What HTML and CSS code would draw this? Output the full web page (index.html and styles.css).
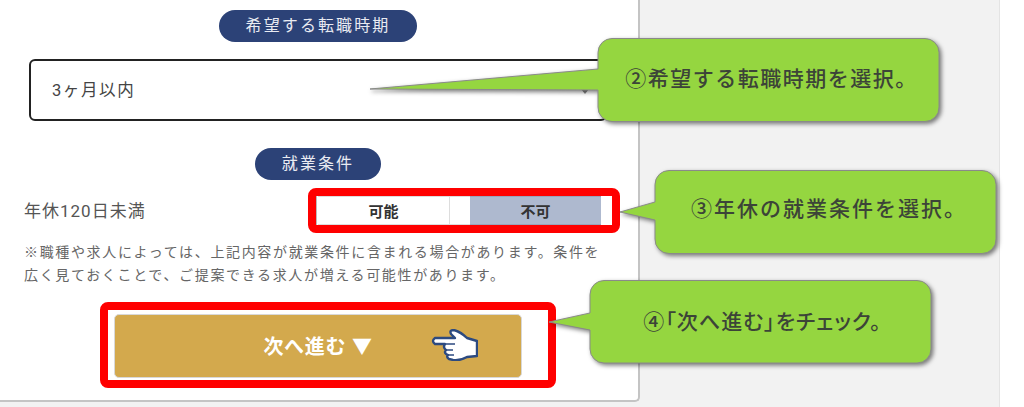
FILE: index.html
```html
<!DOCTYPE html>
<html lang="ja">
  <head>
    <meta charset="UTF-8" />
    <title>希望する転職時期</title>
    <link rel="stylesheet" href="styles.css">
  </head>
  <body>
    <div class="page">
      <div class="card">
        <div class="section-title"><span class="pill">希望する転職時期</span></div>
        <div class="select">
          <span>3ヶ月以内</span>
          <span class="select-arrow"></span>
        </div>

        <div class="section-title section-title-second"><span class="pill">就業条件</span></div>
        <div class="condition-row">
          <span class="condition-label">年休120日未満</span>
          <div class="highlight">
            <div class="toggle">
              <div class="toggle-item">可能</div>
              <div class="toggle-gap"></div>
              <div class="toggle-item toggle-active">不可</div>
            </div>
          </div>
        </div>
        <p class="note">※職種や求人によっては、上記内容が就業条件に含まれる場合があります。条件を<br>広く見ておくことで、ご提案できる求人が増える可能性があります。</p>

        <div class="highlight highlight-next">
          <button class="next-btn" type="button">
            <span class="next-label">次へ進む ▼</span>
            <svg class="hand" viewBox="0 0 47 32" width="47" height="32">
              <path d="M4 9H24L20 5Q18 1 23 1Q30 3 36 9L46 12V27L36 28Q29 32 22 31L18 30Q15 28 17 26L15 25Q13 23 15 21L14 20Q12 18 14 15H4Q0 12 4 9Z" fill="#fff" stroke="#2c4a80" stroke-width="2.4" stroke-linejoin="round"/>
              <path d="M15 15H24M15 21H22M17 26H23" fill="none" stroke="#2c4a80" stroke-width="1.4"/>
            </svg>
          </button>
        </div>
      </div>
    </div>

    <!-- 吹き出し -->
    <div class="callout callout-period">
      <svg class="callout-shape" width="341" height="84">
        <path d="M14 0.5H327A14 14 0 0 1 341 14.5V69A14 14 0 0 1 327 83.5H14A14 14 0 0 1 0 69V52L-228 51L0 31V14.5A14 14 0 0 1 14 0.5Z"/>
      </svg>
      <span class="callout-text">②希望する転職時期を選択。</span>
    </div>
    <div class="callout callout-holiday">
      <svg class="callout-shape" width="341" height="84">
        <path d="M14 0.5H327A14 14 0 0 1 341 14.5V69A14 14 0 0 1 327 83.5H14A14 14 0 0 1 0 69V50L-35 42L0 32V14.5A14 14 0 0 1 14 0.5Z"/>
      </svg>
      <span class="callout-text">③年休の就業条件を選択。</span>
    </div>
    <div class="callout callout-next">
      <svg class="callout-shape" width="341" height="84">
        <path d="M14 0.5H327A14 14 0 0 1 341 14.5V69A14 14 0 0 1 327 83H14A14 14 0 0 1 0 69V50L-41 42L0 33V14.5A14 14 0 0 1 14 0.5Z"/>
      </svg>
      <span class="callout-text callout-text-narrow">④「次へ進む」をチェック。</span>
    </div>
  </body>
</html>
```

FILE: styles.css
```css
* {
  box-sizing: border-box;
}

body {
  margin: 0;
  height: 407px;
  overflow: hidden;
  background-color: #FFFFFF;
  font-family: Roboto, "Noto Sans CJK JP", sans-serif;
  color: #555;
}

.page {
  width: 1000px;
  height: 407px;
  background-color: #F2F2F2;
  border-right: 1px solid #E4E4E4;
}

.card {
  width: 640px;
  height: 402px;
  padding: 10px 26px 0 24px;
  background-color: #FFFFFF;
  border-right: 2px solid #C4C4C4;
  border-bottom: 2px solid #C4C4C4;
  border-radius: 0 0 5px 0;
}

.section-title {
  display: flex;
  justify-content: center;
}

.section-title-second {
  margin-top: 27px;
}

.pill {
  height: 32px;
  padding: 0 27px;
  border-radius: 16px;
  background-color: #2C4277;
  color: #E9EBF2;
  font-size: 16px;
  line-height: 32px;
  letter-spacing: 2.1px;
}

.select {
  display: flex;
  align-items: center;
  justify-content: space-between;
  height: 62px;
  margin: 17px 5px 0;
  padding: 0 16px 3px 21px;
  border: 2.5px solid #222;
  border-radius: 6px;
  font-size: 16.5px;
  letter-spacing: 1.6px;
  color: #444;
}

.select-arrow {
  width: 0;
  height: 0;
  margin-top: 6px;
  border-top: 5px solid #888;
  border-left: 4px solid transparent;
  border-right: 4px solid transparent;
}

.condition-row {
  display: flex;
  align-items: center;
  justify-content: space-between;
  margin-top: 8px;
  margin-right: -8px;
}

.condition-label {
  margin-top: -3px;
  font-size: 17px;
  letter-spacing: 1px;
}

.highlight {
  border: 8px solid #FF0000;
  border-radius: 8px;
  background-color: #FFFFFF;
}

.toggle {
  display: flex;
  width: 296px;
  height: 29px;
  padding-left: 1px;
  padding-right: 10px;
  border-left: 1px solid #BBB;
  font-size: 15px;
  font-weight: 700;
  color: #333;
}

.toggle-item {
  display: flex;
  align-items: center;
  justify-content: center;
  width: 131px;
  border-top: 1px solid #DDD;
  border-bottom: 1px solid #DDD;
}

.toggle-gap {
  width: 21px;
  border-top: 1px solid #DDD;
  border-bottom: 1px solid #DDD;
  border-left: 1px solid #DDD;
}

.toggle-active {
  background-color: #AEB9CF;
  border-color: #9AA4BA;
}

.note {
  margin: 8px 0 0;
  font-size: 14px;
  line-height: 23px;
  letter-spacing: 1.65px;
  white-space: nowrap;
  color: #666;
}

.highlight-next {
  width: 456px;
  height: 86px;
  margin-top: 15px;
  margin-left: 76px;
  padding: 4px 26px 3px 6px;
}

.next-btn {
  position: relative;
  width: 408px;
  height: 64px;
  padding: 0 0 2px;
  border: 1px solid #D8D8D8;
  border-radius: 5px;
  background-color: #D3A94D;
  color: #FFFFFF;
  font-family: inherit;
  font-size: 20px;
  font-weight: 700;
  letter-spacing: 0.7px;
}

.hand {
  position: absolute;
  left: 316px;
  top: 14px;
}

.callout {
  position: absolute;
  display: flex;
  align-items: center;
  justify-content: center;
  width: 341px;
  height: 84px;
}

.callout-period {
  left: 598px;
  top: 38px;
}

.callout-holiday {
  left: 655px;
  top: 170px;
}

.callout-next {
  left: 590px;
  top: 280px;
}

.callout-shape {
  position: absolute;
  left: 0;
  top: 0;
  overflow: visible;
  filter: drop-shadow(2px 2px 2px rgba(0, 0, 0, 0.5));
}

.callout-shape path {
  fill: #95D640;
  stroke: #8A8A8A;
  stroke-width: 1;
}

.callout-text {
  position: relative;
  margin-top: -7px;
  margin-left: 6px;
  font-family: "Noto Sans CJK JP", sans-serif;
  font-size: 21px;
  font-weight: 500;
  letter-spacing: 1.5px;
  color: #3C4438;
}

.callout-holiday .callout-text {
  margin-top: -11px;
  margin-left: 7px;
  letter-spacing: 2px;
}

.callout-text-narrow {
  margin-top: -5px;
  margin-left: 4px;
  font-feature-settings: "palt";
  letter-spacing: 1px;
}
```
